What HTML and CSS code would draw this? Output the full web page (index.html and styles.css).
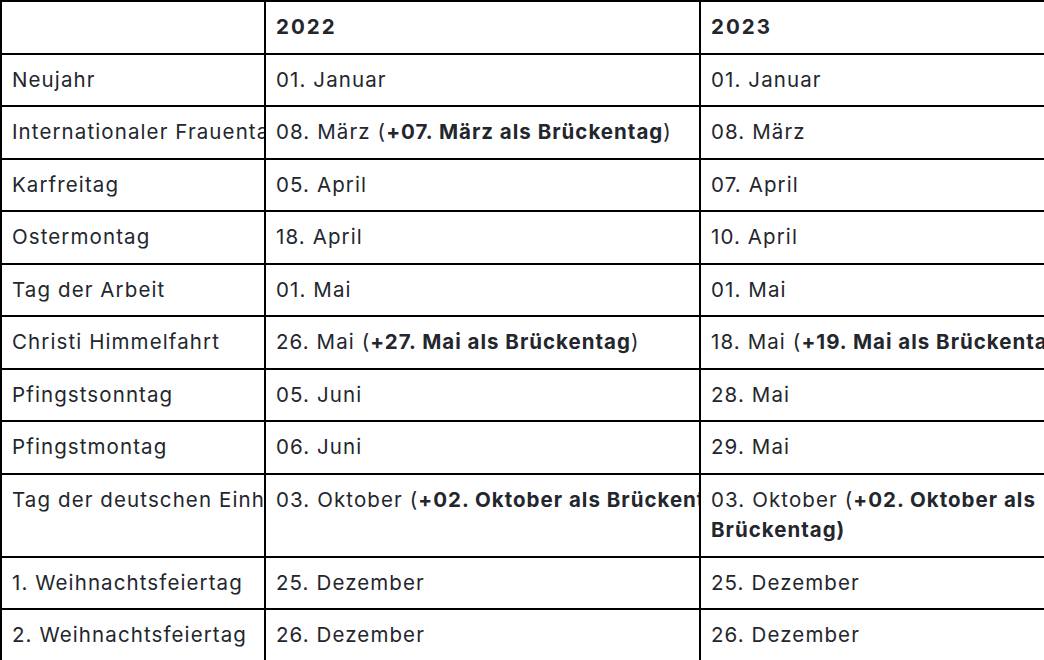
FILE: index.html
```html
<!DOCTYPE html>
<html lang="de">
<head>
<meta charset="utf-8">
<link rel="stylesheet" href="styles.css">
</head>
<body>
<table class="holidays">
  <colgroup>
    <col class="c-name">
    <col class="c-y1">
    <col class="c-y2">
  </colgroup>
  <thead>
    <tr><th></th><th>2022</th><th>2023</th></tr>
  </thead>
  <tbody>
    <tr><td>Neujahr</td><td>01. Januar</td><td>01. Januar</td></tr>
    <tr><td>Internationaler Frauentag</td><td>08. März (<b>+07. März als Brückentag</b>)</td><td>08. März</td></tr>
    <tr><td>Karfreitag</td><td>05. April</td><td>07. April</td></tr>
    <tr><td>Ostermontag</td><td>18. April</td><td>10. April</td></tr>
    <tr><td>Tag der Arbeit</td><td>01. Mai</td><td>01. Mai</td></tr>
    <tr><td>Christi Himmelfahrt</td><td>26. Mai (<b>+27. Mai als Brückentag</b>)</td><td>18. Mai (<b>+19. Mai als Brückentag</b>)</td></tr>
    <tr><td>Pfingstsonntag</td><td>05. Juni</td><td>28. Mai</td></tr>
    <tr><td>Pfingstmontag</td><td>06. Juni</td><td>29. Mai</td></tr>
    <tr><td>Tag der deutschen Einheit</td><td>03. Oktober (<b>+02. Oktober als Brückentag</b>)</td><td>03. Oktober (<b>+02. Oktober als Brückentag)</b></td></tr>
    <tr><td>1. Weihnachtsfeiertag</td><td>25. Dezember</td><td>25. Dezember</td></tr>
    <tr><td>2. Weihnachtsfeiertag</td><td>26. Dezember</td><td>26. Dezember</td></tr>
  </tbody>
</table>
</body>
</html>
```

FILE: styles.css
```css
html, body {
  margin: 0;
  padding: 0;
  background: #ffffff;
  overflow: hidden;
}

body {
  font-family: "Inter", "Liberation Sans", sans-serif;
  font-size: 20.5px;
  letter-spacing: 1.1px;
  color: #23262d;
}

.holidays {
  border-collapse: collapse;
  table-layout: fixed;
  width: 1101px;
}

.c-name { width: 264px; }
.c-y1 { width: 435px; }
.c-y2 { width: 402px; }

.holidays th,
.holidays td {
  border: 2px solid #000;
  padding: 10px 10px;
  line-height: 30.5px;
  text-align: left;
  vertical-align: top;
  white-space: nowrap;
  overflow: hidden;
}

.holidays th {
  font-weight: 700;
  letter-spacing: 2px;
}

.holidays td:last-child,
.holidays th:last-child {
  white-space: normal;
}

.holidays b {
  font-weight: 700;
  letter-spacing: 1px;
}
```
